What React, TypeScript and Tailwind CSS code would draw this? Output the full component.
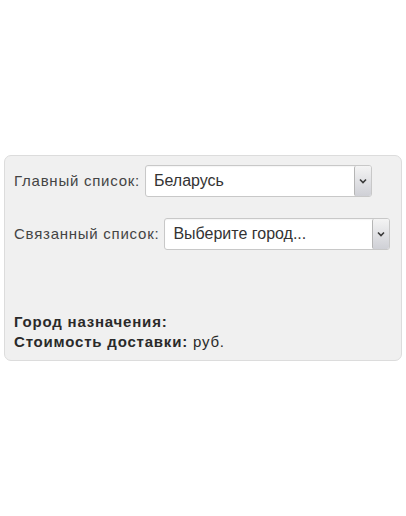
function FakeSelect({ value, width }: { value: string; width: string }) {
  return (
    <div
      className={`flex h-[32px] ${width} items-stretch rounded-[3px] border border-[#c8c8c8] bg-white shadow-[inset_0_1px_1px_rgba(0,0,0,0.04)]`}
    >
      <div className="flex flex-1 items-center pl-[8px] text-[16px] text-[#333]">{value}</div>
      <div className="flex w-[17px] items-center justify-center rounded-[2px] border-l border-[#b5b5b5] bg-gradient-to-b from-[#f4f4f4] to-[#cfd0d6]">
        <svg width="8" height="6" viewBox="0 0 8 6">
          <path d="M1 1.5 L4 4.5 L7 1.5" fill="none" stroke="#3a3a3a" strokeWidth="1.6" />
        </svg>
      </div>
    </div>
  );
}

export default function App() {
  return (
    <div
      className="h-[516px] w-[406px] bg-white pt-[155px]"
      style={{ fontFamily: '"Liberation Sans", Arial, sans-serif' }}
    >
      <div className="mx-[4px] h-[206px] rounded-[7px] border border-[#dcdcdc] bg-[#f0f0f0] pl-[9px] pt-[9px]">
        <div className="flex items-center gap-[5px]">
          <span className="text-[15px] tracking-[0.75px] text-[#444]">Главный список:</span>
          <FakeSelect value="Беларусь" width="w-[227px]" />
        </div>
        <div className="mt-[21px] flex items-center gap-[5px]">
          <span className="text-[15px] tracking-[0.75px] text-[#444]">Связанный список:</span>
          <FakeSelect value="Выберите город..." width="w-[226px]" />
        </div>
        <div className="mt-[62px] text-[15px] leading-[20px] tracking-[0.8px] text-[#2a2a2a]">
          <div className="font-bold">Город назначения:</div>
          <div>
            <span className="font-bold">Стоимость доставки:</span> руб.
          </div>
        </div>
      </div>
    </div>
  );
}
